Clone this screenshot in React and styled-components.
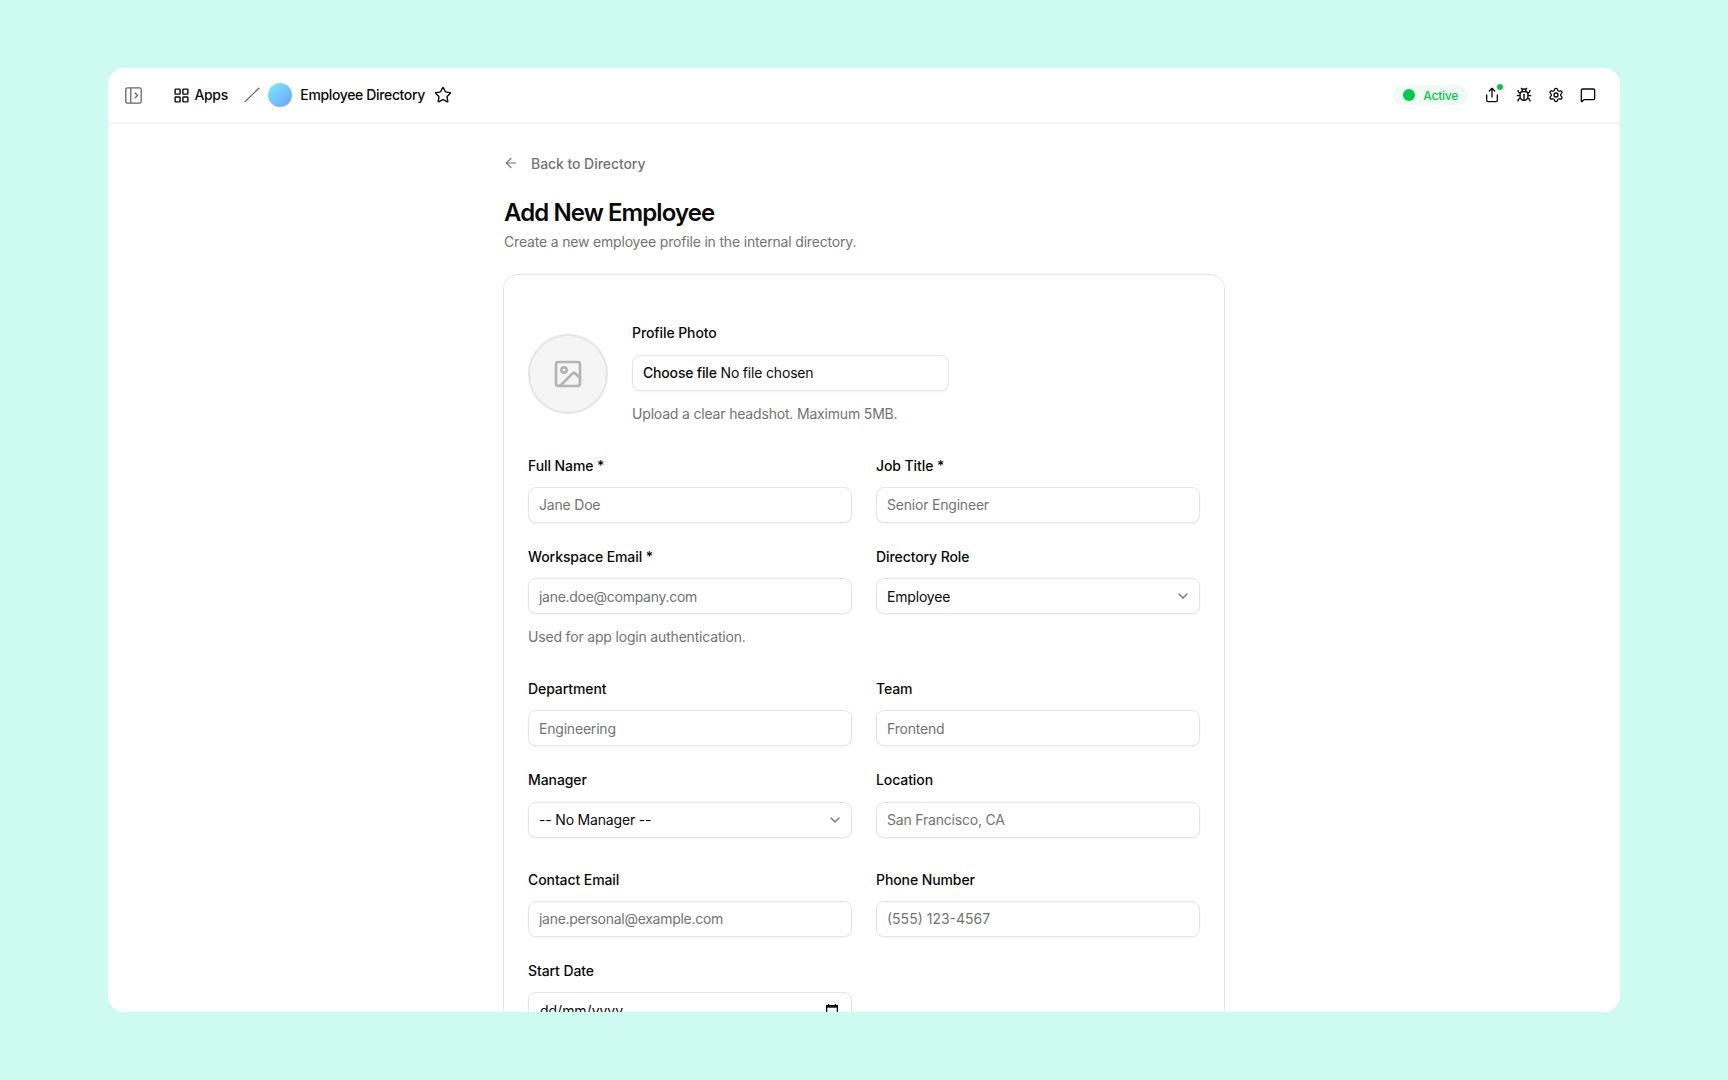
import React from "react";
import styled, { createGlobalStyle } from "styled-components";
import {
  ArrowLeft,
  Bug,
  ChevronDown,
  Image,
  LayoutGrid,
  MessageSquare,
  Settings,
  Share,
  Star,
} from "lucide-react";

const GlobalStyle = createGlobalStyle`
  * {
    box-sizing: border-box;
  }
  body {
    margin: 0;
    background: #cdfbf1;
    color: #0a0a0a;
    font-family: Inter, "Liberation Sans", sans-serif;
    font-size: 14px;
    letter-spacing: -0.18px;
  }
`;

const Desktop = styled.div`
  height: 1080px;
  padding: 68px 108px;
  overflow: hidden;
`;

const Window = styled.div`
  height: 944px;
  display: flex;
  flex-direction: column;
  background: #fff;
  border-radius: 16px;
  overflow: hidden;
`;

const TopBar = styled.header`
  flex: none;
  height: 56px;
  padding: 0 24px 0 17px;
  display: flex;
  align-items: center;
  justify-content: space-between;
  border-bottom: 2px solid #f5f5f5;
`;

const Crumbs = styled.div`
  display: flex;
  align-items: center;
`;

const PanelButton = styled.span`
  display: flex;
  margin-right: 30.5px;
  color: #666;
`;

const AppsLink = styled.a`
  display: flex;
  align-items: center;
  gap: 5px;
  margin-right: 16.5px;
`;

const CrumbText = styled.span`
  font-size: 14px;
  font-weight: 500;
  line-height: 20px;
  letter-spacing: -0.36px;
`;

const AppDot = styled.span`
  width: 24px;
  height: 24px;
  margin: 0 8px;
  border-radius: 50%;
  background: linear-gradient(135deg, #7ee8fb 5%, #6aa5ff 95%);
`;

const StarIcon = styled(Star)`
  margin-left: 9px;
`;

const Actions = styled.div`
  display: flex;
  align-items: center;
  gap: 16px;
`;

const StatusPill = styled.span`
  display: flex;
  align-items: center;
  gap: 8px;
  height: 20px;
  padding: 0 10px;
  border-radius: 10px;
  background: #f0fbf3;
  color: #00c950;
  font-size: 12px;
  font-weight: 500;
  letter-spacing: -0.25px;
`;

const StatusDot = styled.i`
  width: 12px;
  height: 12px;
  border-radius: 50%;
  background: #00c950;
`;

const IconButton = styled.span`
  position: relative;
  display: flex;
`;

const Badge = styled.i`
  position: absolute;
  top: -3px;
  right: -3px;
  width: 6px;
  height: 6px;
  border-radius: 50%;
  background: #00c950;
`;

const Content = styled.main`
  flex: 1;
  min-height: 0;
  width: 720px;
  margin: 0 auto;
  padding-top: 29px;
`;

const BackLink = styled.a`
  display: flex;
  align-items: center;
  gap: 12px;
  height: 20px;
  margin-left: -1px;
  color: #737373;
  font-weight: 500;
  letter-spacing: -0.06px;
`;

const Title = styled.h1`
  margin: 24px 0 0;
  font-size: 24px;
  font-weight: 600;
  line-height: 32px;
  letter-spacing: -0.92px;
`;

const Subtitle = styled.p`
  margin: 3px 0 23.45px;
  line-height: 20px;
  color: #737373;
`;

const Card = styled.form`
  height: 900px;
  padding: 48px 24px;
  border-radius: 14px;
  box-shadow: 0 0 0 1px #e7e7e7;
  display: flex;
  flex-direction: column;
  gap: 32px;
`;

const PhotoRow = styled.div`
  display: flex;
  align-items: center;
  gap: 24px;
`;

const Avatar = styled.div`
  width: 80px;
  height: 80px;
  display: flex;
  align-items: center;
  justify-content: center;
  border: 2px solid #e5e5e5;
  border-radius: 50%;
  background: #f5f5f5;
  color: #b4b4b4;
`;

const FieldGrid = styled.div`
  display: grid;
  grid-template-columns: 1fr 1fr;
  gap: 24px;
  align-items: start;
`;

const FieldBox = styled.div`
  display: flex;
  flex-direction: column;
  gap: 12px;
  width: ${(props) => props.$width || "auto"};
`;

const Label = styled.label`
  font-weight: 500;
  line-height: 19.25px;
  letter-spacing: -0.09px;
`;

const Hint = styled.p`
  margin: 0;
  line-height: 21px;
  color: #737373;
`;

const Control = styled.div`
  height: 36px;
  padding: 0 8px 0 10px;
  display: flex;
  align-items: center;
  justify-content: space-between;
  border: 1px solid #e5e5e5;
  border-radius: 8px;
  background: #fff;
  box-shadow: 0 1px 2px rgba(0, 0, 0, 0.05);
`;

const inputSpacing = {
  text: "-0.2px",
  email: "-0.28px",
  tel: "0",
};

const Input = styled.input`
  height: 36px;
  width: 100%;
  padding: 0 10px;
  border: 1px solid #e5e5e5;
  border-radius: 8px;
  background: #fff;
  box-shadow: 0 1px 2px rgba(0, 0, 0, 0.05);
  font: inherit;
  letter-spacing: ${(props) => inputSpacing[props.type]};
  outline: none;
  &::placeholder {
    color: #737373;
    opacity: 1;
  }
`;

const DateControl = styled(Control)`
  padding: 0 13px 0 11px;
  letter-spacing: -0.02px;
`;

const FileButton = styled.span`
  font-weight: 500;
`;

const Chevron = styled(ChevronDown)`
  color: #737373;
`;

const PanelIcon = () => (
  <svg width="17" height="17" viewBox="0 0 17 17" fill="none" stroke="currentColor" strokeWidth="1.3">
    <rect x="0.8" y="0.8" width="15.4" height="15.4" rx="1.8" />
    <path d="M5.8 1v15" />
    <path d="M9.8 5.8l2.7 2.7-2.7 2.7" />
  </svg>
);

const SlashIcon = () => (
  <svg width="16" height="16" viewBox="0 0 16 16" fill="none" stroke="#666" strokeWidth="1.2">
    <path d="M0.7 15L15.3 0.8" />
  </svg>
);

const CalendarIcon = () => (
  <svg width="12" height="13" viewBox="0 0 12 13" fill="none" stroke="#0a0a0a" strokeWidth="1.3">
    <rect x="0.65" y="1.6" width="10.7" height="10.7" />
    <path d="M0 2.5h12" strokeWidth="2.4" />
    <path d="M2.6 0v2M9.4 0v2" />
  </svg>
);

const Field = ({ label, placeholder, hint, type = "text" }) => (
  <FieldBox>
    <Label>{label}</Label>
    <Input type={type} placeholder={placeholder} />
    {hint && <Hint>{hint}</Hint>}
  </FieldBox>
);

const SelectField = ({ label, value }) => (
  <FieldBox>
    <Label>{label}</Label>
    <Control>
      <span>{value}</span>
      <Chevron size={16} />
    </Control>
  </FieldBox>
);

const App = () => {
  return (
    <Desktop>
      <GlobalStyle />
      <Window>
        <TopBar>
          <Crumbs>
            <PanelButton>
              <PanelIcon />
            </PanelButton>
            <AppsLink>
              <LayoutGrid size={17} />
              <CrumbText>Apps</CrumbText>
            </AppsLink>
            <SlashIcon />
            <AppDot />
            <CrumbText>Employee Directory</CrumbText>
            <StarIcon size={18} strokeWidth={1.9} />
          </Crumbs>
          <Actions>
            <StatusPill>
              <StatusDot />
              Active
            </StatusPill>
            <IconButton>
              <Share size={16} />
              <Badge />
            </IconButton>
            <IconButton>
              <Bug size={16} />
            </IconButton>
            <IconButton>
              <Settings size={16} />
            </IconButton>
            <IconButton>
              <MessageSquare size={16} />
            </IconButton>
          </Actions>
        </TopBar>
        <Content>
          <BackLink>
            <ArrowLeft size={16} strokeWidth={1.8} />
            <span>Back to Directory</span>
          </BackLink>
          <Title>Add New Employee</Title>
          <Subtitle>Create a new employee profile in the internal directory.</Subtitle>
          <Card>
            <PhotoRow>
              <Avatar>
                <Image size={32} />
              </Avatar>
              <FieldBox $width="317px">
                <Label>Profile Photo</Label>
                <Control>
                  <span>
                    <FileButton>Choose file</FileButton> No file chosen
                  </span>
                </Control>
                <Hint>Upload a clear headshot. Maximum 5MB.</Hint>
              </FieldBox>
            </PhotoRow>
            <FieldGrid>
              <Field label="Full Name *" placeholder="Jane Doe" />
              <Field label="Job Title *" placeholder="Senior Engineer" />
              <Field
                label="Workspace Email *"
                placeholder="jane.doe@company.com"
                hint="Used for app login authentication."
                type="email"
              />
              <SelectField label="Directory Role" value="Employee" />
            </FieldGrid>
            <FieldGrid>
              <Field label="Department" placeholder="Engineering" />
              <Field label="Team" placeholder="Frontend" />
              <SelectField label="Manager" value="-- No Manager --" />
              <Field label="Location" placeholder="San Francisco, CA" />
            </FieldGrid>
            <FieldGrid>
              <Field label="Contact Email" placeholder="jane.personal@example.com" type="email" />
              <Field label="Phone Number" placeholder="(555) 123-4567" type="tel" />
              <FieldBox>
                <Label>Start Date</Label>
                <DateControl>
                  <span>dd/mm/yyyy</span>
                  <CalendarIcon />
                </DateControl>
              </FieldBox>
            </FieldGrid>
          </Card>
        </Content>
      </Window>
    </Desktop>
  );
};

export default App;
